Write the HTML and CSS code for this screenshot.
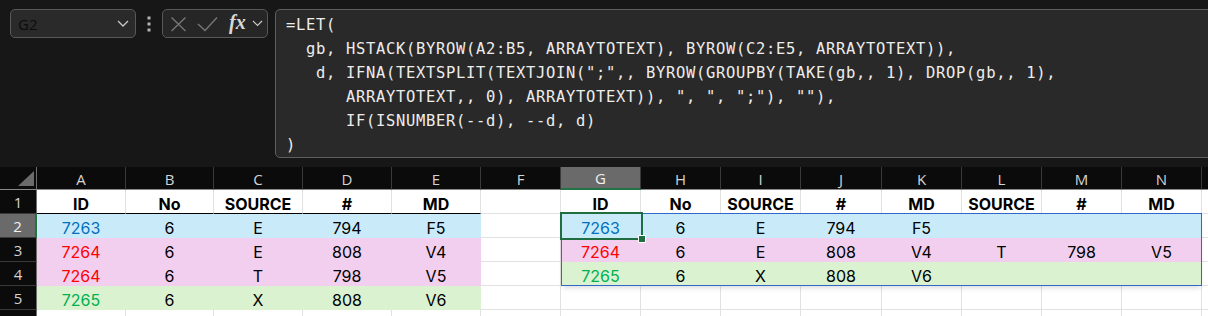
FILE: index.html
```html
<!DOCTYPE html>
<html lang="en">
<head>
    <meta charset="UTF-8">
    <title>LET formula</title>
    <link rel="stylesheet" href="styles.css">
</head>
<body>
<div class="topbar">
    <div class="namebox">
        <span>G2</span>
        <svg width="12" height="7" viewBox="0 0 12 7"><polyline points="1,1 6,6 11,1" fill="none" stroke="#c8c8c8" stroke-width="1.3"/></svg>
    </div>
    <div class="dots">
        <svg width="4" height="16" viewBox="0 0 4 16"><rect x="0.5" y="0.5" width="3" height="3" fill="#b4b4b4"/><rect x="0.5" y="6.5" width="3" height="3" fill="#b4b4b4"/><rect x="0.5" y="12.5" width="3" height="3" fill="#b4b4b4"/></svg>
    </div>
    <div class="fxbox">
        <svg class="ico" width="17" height="16" viewBox="0 0 17 16"><path d="M1.5 1.5 L15.5 15 M15.5 1.5 L1.5 15" stroke="#767676" stroke-width="1.4" fill="none"/></svg>
        <svg class="ico" width="21" height="16" viewBox="0 0 21 16"><polyline points="1,8 8,14.5 20,1.5" stroke="#767676" stroke-width="1.4" fill="none"/></svg>
        <span class="fx">fx</span>
        <svg width="11" height="7" viewBox="0 0 11 7"><polyline points="1,1 5.5,5.5 10,1" fill="none" stroke="#c8c8c8" stroke-width="1.2"/></svg>
    </div>
    <!-- formula bar -->
    <div class="formula">=LET(
  gb, HSTACK(BYROW(A2:B5, ARRAYTOTEXT), BYROW(C2:E5, ARRAYTOTEXT)),
   d, IFNA(TEXTSPLIT(TEXTJOIN(";",, BYROW(GROUPBY(TAKE(gb,, 1), DROP(gb,, 1),
      ARRAYTOTEXT,, 0), ARRAYTOTEXT)), ", ", ";"), ""),
      IF(ISNUMBER(--d), --d, d)
)</div>
</div>

<div class="sheet">
    <!-- column headers -->
    <div class="corner"><span class="tri"></span></div>
    <div class="hd">A</div><div class="hd">B</div><div class="hd">C</div><div class="hd">D</div><div class="hd">E</div>
    <div class="hd">F</div><div class="hd sel">G</div><div class="hd">H</div><div class="hd">I</div><div class="hd">J</div>
    <div class="hd">K</div><div class="hd">L</div><div class="hd">M</div><div class="hd">N</div><div class="hd"></div>

    <!-- row 1 -->
    <div class="rh">1</div>
    <div class="c b under">ID</div><div class="c b under">No</div><div class="c b under">SOURCE</div><div class="c b under">#</div><div class="c b under">MD</div>
    <div class="c"></div>
    <div class="c b">ID</div><div class="c b">No</div><div class="c b">SOURCE</div><div class="c b">#</div><div class="c b">MD</div>
    <div class="c b">SOURCE</div><div class="c b">#</div><div class="c b">MD</div><div class="c"></div>

    <!-- row 2 -->
    <div class="rh sel">2</div>
    <div class="c f-blue t-blue">7263</div><div class="c f-blue">6</div><div class="c f-blue">E</div><div class="c f-blue">794</div><div class="c f-blue">F5</div>
    <div class="c"></div>
    <div class="c f-blue t-blue">7263</div><div class="c f-blue">6</div><div class="c f-blue">E</div><div class="c f-blue">794</div><div class="c f-blue">F5</div>
    <div class="c f-blue"></div><div class="c f-blue"></div><div class="c f-blue"></div><div class="c"></div>

    <!-- row 3 -->
    <div class="rh">3</div>
    <div class="c f-pink t-red">7264</div><div class="c f-pink">6</div><div class="c f-pink">E</div><div class="c f-pink">808</div><div class="c f-pink">V4</div>
    <div class="c"></div>
    <div class="c f-pink t-red">7264</div><div class="c f-pink">6</div><div class="c f-pink">E</div><div class="c f-pink">808</div><div class="c f-pink">V4</div>
    <div class="c f-pink">T</div><div class="c f-pink">798</div><div class="c f-pink">V5</div><div class="c"></div>

    <!-- row 4 -->
    <div class="rh">4</div>
    <div class="c f-pink t-red">7264</div><div class="c f-pink">6</div><div class="c f-pink">T</div><div class="c f-pink">798</div><div class="c f-pink">V5</div>
    <div class="c"></div>
    <div class="c f-green t-green">7265</div><div class="c f-green">6</div><div class="c f-green">X</div><div class="c f-green">808</div><div class="c f-green">V6</div>
    <div class="c f-green"></div><div class="c f-green"></div><div class="c f-green"></div><div class="c"></div>

    <!-- row 5 -->
    <div class="rh">5</div>
    <div class="c f-green t-green">7265</div><div class="c f-green">6</div><div class="c f-green">X</div><div class="c f-green">808</div><div class="c f-green">V6</div>
    <div class="c"></div><div class="c"></div><div class="c"></div><div class="c"></div><div class="c"></div>
    <div class="c"></div><div class="c"></div><div class="c"></div><div class="c"></div><div class="c"></div>

    <!-- row 6, only its top edge shows -->
    <div class="rh"></div>
    <div class="c"></div><div class="c"></div><div class="c"></div><div class="c"></div><div class="c"></div>
    <div class="c"></div><div class="c"></div><div class="c"></div><div class="c"></div><div class="c"></div>
    <div class="c"></div><div class="c"></div><div class="c"></div><div class="c"></div><div class="c"></div>

    <!-- spill range and active cell -->
    <div class="spill"></div>
    <div class="active"></div>
    <div class="handle"></div>
</div>
</body>
</html>
```

FILE: styles.css
```css
* {
    margin: 0;
    padding: 0;
    box-sizing: border-box;
}
body {
    background-color: #171717;
    overflow: hidden;
    font-family: "Inter", "Liberation Sans", sans-serif;
}
.topbar {
    display: flex;
    align-items: flex-start;
    height: 167px;
    padding: 9px 0 0 10px;
}
.namebox {
    width: 126px;
    height: 29px;
    flex-shrink: 0;
    display: flex;
    align-items: center;
    justify-content: space-between;
    padding: 0 6px 0 7px;
    background-color: #2a2a2a;
    border: 1px solid #585858;
    border-radius: 5px;
    font-family: "Open Sans", "Liberation Sans", sans-serif;
    font-size: 15px;
    color: #0c0c0c;
}
.dots {
    width: 26px;
    height: 29px;
    flex-shrink: 0;
    display: flex;
    align-items: center;
    justify-content: center;
}
.fxbox {
    width: 106px;
    height: 29px;
    flex-shrink: 0;
    margin-right: 7px;
    display: flex;
    align-items: center;
    padding-left: 7px;
    background-color: #262626;
    border: 1px solid #585858;
    border-radius: 5px;
}
.fxbox .ico {
    margin-right: 10px;
}
.fx {
    font-family: "Liberation Serif", serif;
    font-style: italic;
    font-weight: bold;
    font-size: 20px;
    color: #d8d8d8;
    margin: -3px 6px 0 1px;
}
.formula {
    width: 960px;
    height: 149px;
    flex-shrink: 0;
    padding: 3px 0 0 10px;
    background-color: #292929;
    border: 1px solid #5e5e5e;
    border-radius: 5px;
    font-family: "DejaVu Sans Mono", "Liberation Mono", monospace;
    font-size: 15.5px;
    letter-spacing: 0.67px;
    line-height: 24px;
    color: #ededed;
    white-space: pre;
}
.sheet {
    position: relative;
    display: grid;
    grid-template-columns: 37px 89px 88px 89px 89px 89px 80px 80px 80px 80px 81px 80px 80px 80px 80px 80px;
    grid-template-rows: 23px repeat(6, 24px);
    width: 1300px;
}
.corner {
    position: relative;
    background-color: #0b0b0b;
    border-right: 1px solid #6e6e6e;
    border-bottom: 1px solid #8a8a8a;
}
.tri {
    position: absolute;
    right: 2px;
    bottom: 3px;
    width: 16px;
    height: 15px;
    background-color: #6b6b6b;
    clip-path: polygon(100% 0, 100% 100%, 0 100%);
}
.hd {
    display: flex;
    align-items: center;
    justify-content: center;
    background-color: #0b0b0b;
    border-right: 1px solid #3a3a3a;
    border-bottom: 1px solid #8a8a8a;
    font-family: "Open Sans", "Liberation Sans", sans-serif;
    font-size: 15px;
    color: #d4d4d4;
    padding-top: 1px;
}
.hd.sel {
    background-color: #6a6a6a;
    color: #f2f2f2;
    border-bottom: 2px solid #217346;
}
.rh {
    display: flex;
    align-items: center;
    justify-content: center;
    background-color: #0b0b0b;
    border-right: 1px solid #6e6e6e;
    border-bottom: 1px solid #3a3a3a;
    font-family: "Open Sans", "Liberation Sans", sans-serif;
    font-size: 15px;
    color: #d4d4d4;
    padding-top: 1px;
}
.rh.sel {
    background-color: #6a6a6a;
    color: #f2f2f2;
    border-right: 2px solid #217346;
}
.c {
    display: flex;
    align-items: center;
    justify-content: center;
    padding-top: 4px;
    background-color: #ffffff;
    border-right: 1px solid #e1e1e1;
    border-bottom: 1px solid #e1e1e1;
    font-size: 16px;
    color: #000000;
}
.b {
    font-weight: bold;
}
.under {
    border-bottom-color: #000000;
}
.f-blue {
    background-color: #c9ebf9;
    border-color: #c9ebf9;
}
.f-pink {
    background-color: #f2cfee;
    border-color: #f2cfee;
}
.f-green {
    background-color: #daf2d0;
    border-color: #daf2d0;
}
.t-blue {
    color: #0070c0;
}
.t-red {
    color: #ff0000;
}
.t-green {
    color: #00b050;
}
.spill {
    position: absolute;
    left: 561px;
    top: 46px;
    width: 641px;
    height: 73px;
    border: 1px solid #3167c9;
    box-shadow: 0 4px 5px -2px rgba(0, 0, 0, 0.14);
}
.active {
    position: absolute;
    left: 560px;
    top: 45px;
    width: 83px;
    height: 28px;
    border: 2px solid #1e6e42;
}
.handle {
    position: absolute;
    left: 638px;
    top: 68px;
    width: 8px;
    height: 8px;
    background-color: #1e6e42;
    border: 1px solid #ffffff;
}
```
